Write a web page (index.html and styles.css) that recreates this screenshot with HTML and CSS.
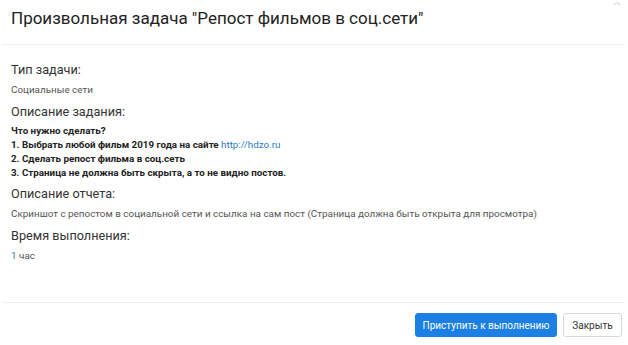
FILE: index.html
```html
<!DOCTYPE html>
<html lang="ru">
<head>
<meta charset="utf-8">
<link rel="stylesheet" href="styles.css">
</head>
<body>
<div class="modal">
  <div class="modal-header">
    <h1 class="title">Произвольная задача "Репост фильмов в соц.сети"</h1>
    <span class="close-x"><svg width="8" height="4" viewBox="0 0 8 4"><path d="M1 3.5 L2.5 1 L5.5 1 L7 3.5" fill="none" stroke="#c8c8c8" stroke-width="0.8"/></svg></span>
  </div>
  <div class="modal-body">
    <h2 class="label">Тип задачи:</h2>
    <p class="text">Социальные сети</p>
    <h2 class="label">Описание задания:</h2>
    <div class="desc">
      <p class="bold">Что нужно сделать?</p>
      <p class="bold">1. Выбрать любой фильм 2019 года на сайте <a class="link" href="#">http://hdzo.ru</a></p>
      <p class="bold">2. Сделать репост фильма в соц.сеть</p>
      <p class="bold">3. Страница не должна быть скрыта, а то не видно постов.</p>
    </div>
    <h2 class="label">Описание отчета:</h2>
    <p class="text">Скриншот с репостом в социальной сети и ссылка на сам пост (Страница должна быть открыта для просмотра)</p>
    <h2 class="label">Время выполнения:</h2>
    <p class="text"><span class="num">1</span> час</p>
  </div>
  <div class="modal-footer">
    <button class="btn btn-primary">Приступить к выполнению</button>
    <button class="btn btn-default">Закрыть</button>
  </div>
</div>
</body>
</html>
```

FILE: styles.css
```css
html, body {
  margin: 0;
  padding: 0;
  background: #fff;
}
body {
  font-family: Roboto, "Liberation Sans", sans-serif;
  color: #333;
}
.modal {
  display: flex;
  flex-direction: column;
  height: 345px;
  margin: 0 3px 0 2px;
  position: relative;
}
.modal-header {
  height: 44px;
  border-bottom: 1px solid #eceeef;
  display: flex;
  align-items: flex-start;
  padding: 0 9px;
}
.title {
  margin: 7px 0 0;
  font-size: 17px;
  line-height: 22px;
  font-weight: 400;
  color: #222;
}
.close-x {
  position: absolute;
  top: 1px;
  right: 4px;
  line-height: 0;
}
.modal-body {
  flex: 1;
  padding: 15px 9px 0;
}
.label {
  margin: 5px 0 0;
  font-size: 12.7px;
  line-height: 20px;
  font-weight: 400;
  color: #333;
}
.label:first-child {
  margin-top: 0;
}
.text {
  margin: 3px 0 0;
  font-size: 9.9px;
  line-height: 14px;
  color: #555;
}
.desc {
  margin: 2px 0 4px;
}
.desc + .label {
  margin-top: 4px;
}
.bold {
  margin: 0;
  font-size: 9.8px;
  line-height: 14px;
  font-weight: 700;
  color: #222;
}
.link {
  color: #2a7ac2;
  font-weight: 400;
  text-decoration: none;
}
.num {
  color: #4a74a6;
}
.modal-footer {
  border-top: 1px solid #eceeef;
  display: flex;
  justify-content: flex-end;
  align-items: flex-start;
  gap: 6px;
  padding: 10px 3px 0 0;
  box-sizing: border-box;
  height: 43px;
}
.btn {
  height: 24px;
  font-family: Roboto, "Liberation Sans", sans-serif;
  font-size: 10px;
  border-radius: 3px;
  padding: 0;
  white-space: nowrap;
  cursor: pointer;
}
.btn-primary {
  width: 142px;
  background: #1b7fe3;
  border: 1px solid #1b7fe3;
  color: #fff;
}
.btn-default {
  width: 59px;
  background: #fff;
  border: 1px solid #d9d9d9;
  color: #333;
}
```
